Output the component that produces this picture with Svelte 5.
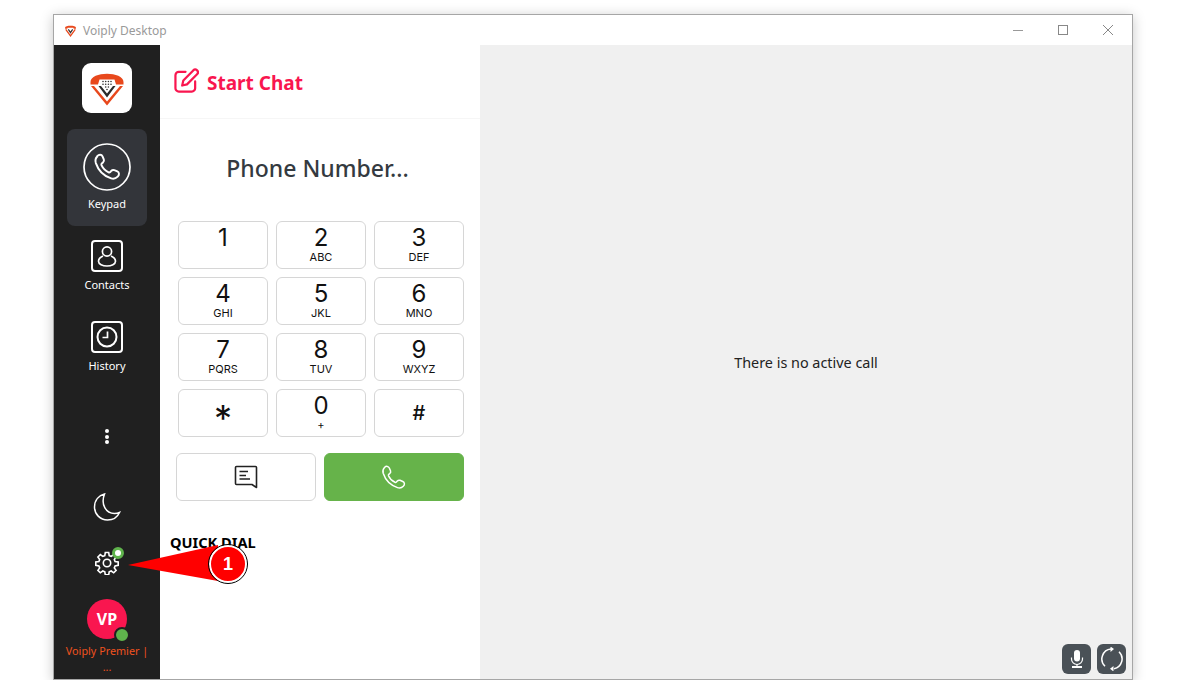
<script>
  const keys = [
    ['1', ''], ['2', 'ABC'], ['3', 'DEF'],
    ['4', 'GHI'], ['5', 'JKL'], ['6', 'MNO'],
    ['7', 'PQRS'], ['8', 'TUV'], ['9', 'WXYZ']
  ];
</script>

<div class="window">
  <header class="titlebar">
    <svg class="ticon" viewBox="0 0 12 12" width="13" height="13">
      <path d="M1 3.200C1 1 11 1 11 3.200V4.400H9L8.600 3.400H3.400L3 4.400H1Z" fill="#e8481c"/>
      <path d="M1.600 5 6 11 10.400 5" fill="none" stroke="#e8481c" stroke-width="1.200"/>
      <path d="M4 5 6 8 8 5" fill="none" stroke="#333" stroke-width="1.100"/>
    </svg>
    <span class="ttext">Voiply Desktop</span>
    <div class="controls">
      <span class="ctl"><svg width="12" height="12" viewBox="0 0 12 12"><path d="M1 6.500H11" stroke="#999" fill="none"/></svg></span>
      <span class="ctl"><svg width="12" height="12" viewBox="0 0 12 12"><rect x="1.500" y="1.500" width="9" height="9" stroke="#888" fill="none"/></svg></span>
      <span class="ctl"><svg width="12" height="12" viewBox="0 0 12 12"><path d="M1 1 11 11M11 1 1 11" stroke="#888" fill="none"/></svg></span>
    </div>
  </header>

  <div class="body">
    <aside class="sidebar">
      <div class="logo">
        <svg viewBox="0 0 36 36" width="36" height="36">
          <path d="M1.500 12C1.500 1 34.500 1 34.500 12V14.500H27L25.500 9.500H10.500L9 14.500H1.500Z" fill="#e8481c"/>
          <path d="M2 16H5L18 31.500 31 16H34L18 35.500Z" fill="#e8481c"/>
          <path d="M9.500 16H12L18 23.500 24 16H26.500L18 27.500Z" fill="#2b2b2b"/>
          <g fill="#333"><circle cx="14" cy="11.500" r=".8"/><circle cx="16.700" cy="11.500" r=".8"/><circle cx="19.400" cy="11.500" r=".8"/><circle cx="22" cy="11.500" r=".8"/><circle cx="14" cy="14.200" r=".8"/><circle cx="16.700" cy="14.200" r=".8"/><circle cx="19.400" cy="14.200" r=".8"/><circle cx="22" cy="14.200" r=".8"/><circle cx="16.700" cy="17" r=".8"/><circle cx="19.400" cy="17" r=".8"/><circle cx="18" cy="19.500" r=".8"/></g>
        </svg>
      </div>

      <div class="nav active">
        <svg viewBox="0 0 48 48" width="48" height="48" fill="none" stroke="#fff" stroke-width="1.700">
          <circle cx="24" cy="24" r="23"/>
          <path transform="translate(24 24) scale(1.15) translate(-24 -24)" d="M15.500 14.500c1.500-1.500 3.800-1.500 4.600.3l1.100 2.600c.4 1 .1 2-.7 2.700l-1 .9c-.4.400-.5.900-.3 1.400 1.300 2.800 3.400 5 6.200 6.300.5.200 1 .1 1.400-.3l.9-1c.7-.8 1.700-1 2.700-.7l2.600 1.100c1.800.8 1.800 3.100.3 4.600-1.500 1.500-3.600 2.200-5.700 1.500-7-2.300-11-6.500-13.300-13.300-.6-2 0-4.500 1.200-5.700Z"/>
        </svg>
        <span>Keypad</span>
      </div>

      <div class="nav">
        <svg viewBox="0 0 32 32" width="32" height="32" fill="none" stroke="#fff" stroke-width="1.700">
          <rect x="1" y="1" width="30" height="30" rx="3" stroke-width="2"/>
          <circle cx="16" cy="11.500" r="4.600"/>
          <path d="M12 16C8.500 17.500 7.500 19.800 7.500 21.300 7.500 24 11.500 26 16 26S24.500 24 24.500 21.300C24.500 19.800 23.500 17.500 20 16"/>
        </svg>
        <span>Contacts</span>
      </div>

      <div class="nav">
        <svg viewBox="0 0 32 32" width="32" height="32" fill="none" stroke="#fff" stroke-width="1.700">
          <rect x="1" y="1" width="30" height="30" rx="3" stroke-width="2"/>
          <circle cx="16" cy="16" r="9.500" stroke-width="2"/>
          <path d="M16.500 10.500V16.500H11.500"/>
        </svg>
        <span>History</span>
      </div>

      <div class="dots"><i></i><i></i><i></i></div>

      <svg class="moon" viewBox="0 0 30 30" width="30" height="30" fill="none" stroke="#fff" stroke-width="1.500">
        <path d="M12.500 2C7 3.500 2.500 8 2.500 15c0 7 5.500 13 13 13 5.500 0 10-3 12-7.500-1 .5-3 1-5 1C14 21.500 8.500 12.500 12.500 2Z"/>
      </svg>

      <div class="gear">
        <svg viewBox="0 0 24 24" width="24" height="24" fill="none" stroke="#fff" stroke-width="1.600">
          <circle cx="12" cy="12" r="3.700"/>
          <path d="M10.300 1.500h3.400l.5 3.100 2 .8 2.500-1.800 2.400 2.400-1.800 2.500.8 2 3.100.5v3.400l-3.100.5-.8 2 1.800 2.500-2.400 2.400-2.500-1.800-2 .8-.5 3.100h-3.400l-.5-3.100-2-.8-2.500 1.800-2.400-2.400 1.800-2.500-.8-2-3.100-.5v-3.400l3.100-.5.8-2-1.800-2.500 2.400-2.400 2.500 1.800 2-.8Z"/>
        </svg>
        <span class="gbadge"></span>
      </div>

      <div class="avatar">VP<span class="status"></span></div>
      <div class="user">Voiply Premier |<br />...</div>
    </aside>

    <section class="panel">
      <div class="chat-head">
        <svg viewBox="0 0 26 26" width="25" height="25" fill="none" stroke="#f9164f" stroke-width="2.300" stroke-linecap="round" stroke-linejoin="round">
          <path d="M12 4H5a3.500 3.500 0 0 0-3.500 3.500V21A3.500 3.500 0 0 0 5 24.500h13.500A3.500 3.500 0 0 0 22 21v-7"/>
          <path d="M20 2.500a2.800 2.800 0 0 1 4 4L13.500 17l-5 1.200L9.700 13Z"/>
        </svg>
        <h2>Start Chat</h2>
      </div>

      <div class="number">Phone Number...</div>

      <div class="keys">
        {#each keys as [d, l]}
          <button class="key"><b>{d}</b><small>{l}</small></button>
        {/each}
        <button class="key sym"><b class="star">*</b></button>
        <button class="key"><b>0</b><small>+</small></button>
        <button class="key sym"><b class="hash">#</b></button>
      </div>

      <div class="actions">
        <button class="act" aria-label="Message">
          <svg viewBox="0 0 26 26" width="26" height="26" fill="none" stroke="#222" stroke-width="1.600" stroke-linejoin="round">
            <path d="M3.500 2.500H22.500a1 1 0 0 1 1 1V23.500L19 20.500H3.500a1 1 0 0 1-1-1V3.500a1 1 0 0 1 1-1Z"/>
            <path d="M6.500 7.500H15M6.500 11.500H13M6.500 15H17"/>
          </svg>
        </button>
        <button class="act call" aria-label="Call">
          <svg viewBox="0 0 26 26" width="26" height="26" fill="none" stroke="#fff" stroke-width="1.500">
            <path d="M3.500 3.500c1.800-1.800 4-1.300 4.800.5l1.200 2.800c.4 1 .1 2-.7 2.700l-1 .9c-.4.400-.5.900-.3 1.400 1.300 3 3.400 5.200 6.500 6.500.5.200 1 .1 1.400-.3l.9-1c.7-.8 1.700-1 2.700-.7l2.800 1.200c1.800.8 2.300 3 .5 4.800-1.500 1.500-3.800 2-5.800 1.300-7-2.300-12-7.300-14.300-14.300-.6-2-.2-4.300 1.300-5.800Z"/>
          </svg>
        </button>
      </div>

      <h3 class="quick">QUICK DIAL</h3>
    </section>

    <main class="stage">
      <p>There is no active call</p>
      <div class="tools">
        <button class="tool" aria-label="Microphone">
          <svg viewBox="0 0 20 20" width="20" height="20" fill="#fff">
            <rect x="7" y="1" width="6" height="11.500" rx="3"/>
            <path d="M4.500 8.500v1.500a5.500 5.500 0 0 0 11 0V8.500" fill="none" stroke="#fff" stroke-width="1.200"/>
            <rect x="9.400" y="15" width="1.200" height="2.500"/><rect x="5" y="17" width="10" height="2"/>
          </svg>
        </button>
        <button class="tool" aria-label="Refresh">
          <svg viewBox="0 0 24 24" width="24" height="24" fill="none" stroke="#fff" stroke-width="1.500">
            <path d="M11 2A10 10 0 0 0 5 19.200"/>
            <path d="M19 4.800A10 10 0 0 1 14 21.800"/>
            <path d="M10.500 -.5 14 2 10.500 5Z" fill="#fff" stroke="none"/>
            <path d="M13.500 19 10 21.800 13.500 24.500Z" fill="#fff" stroke="none"/>
          </svg>
        </button>
      </div>
    </main>
  </div>

  <div class="callout">
    <svg viewBox="0 0 120 44" width="120" height="44"><path d="M0 24 90 4V40Z" fill="#f00"/></svg>
    <span class="num">1</span>
  </div>
</div>

<style>
  :global(body) { margin: 0; background: #fff; }
  * { box-sizing: border-box; }
  button { font: inherit; padding: 0; cursor: pointer; }

  .window {
    position: relative;
    width: 1080px;
    height: 666px;
    margin: 14px 0 0 53px;
    border: 1px solid #a6a6a6;
    background: #fff;
    box-shadow: 0 2px 12px rgba(0, 0, 0, .22);
    display: flex;
    flex-direction: column;
    font-family: "Noto Sans", sans-serif;
    overflow: visible;
  }
  .titlebar {
    height: 30px;
    flex: none;
    display: flex;
    align-items: center;
    padding-left: 10px;
    background: #fff;
  }
  .ttext { margin-left: 6px; font-size: 12px; color: #9a9a9a; }
  .controls { margin-left: auto; display: flex; padding-right: 2px; }
  .ctl { width: 45px; height: 30px; display: flex; align-items: center; justify-content: center; }

  .body { flex: 1; display: flex; min-height: 0; }

  .sidebar {
    width: 106px;
    flex: none;
    background: #202020;
    color: #fff;
    display: flex;
    flex-direction: column;
    align-items: center;
    padding-top: 18px;
  }
  .logo {
    width: 50px;
    height: 50px;
    border-radius: 9px;
    background: #fff;
    display: flex;
    align-items: center;
    justify-content: center;
    margin-bottom: 16px;
  }
  .nav {
    width: 80px;
    height: 81px;
    display: flex;
    flex-direction: column;
    align-items: center;
    padding-top: 14px;
    gap: 5px;
    font-size: 11px;
    line-height: 15px;
  }
  .nav.active {
    height: 97px;
    border-radius: 8px;
    background: #33353a;
  }
  .dots {
    display: flex;
    flex-direction: column;
    gap: 1.500px;
    margin-top: 41px;
  }
  .dots i { width: 4px; height: 4px; border-radius: 50%; background: #fff; display: block; }
  .moon { margin-top: 48px; }
  .gear { position: relative; margin-top: 29px; height: 24px; }
  .gear svg { display: block; }
  .gbadge {
    position: absolute;
    top: -4px;
    right: -5px;
    width: 12px;
    height: 12px;
    border-radius: 50%;
    background: #fff;
    border: 3px solid #5fb34c;
  }
  .avatar {
    position: relative;
    width: 40px;
    height: 40px;
    margin-top: 24px;
    border-radius: 50%;
    background: #f9164f;
    font-weight: 700;
    font-size: 16px;
    display: flex;
    align-items: center;
    justify-content: center;
  }
  .status {
    position: absolute;
    right: -3px;
    bottom: -4px;
    width: 16px;
    height: 16px;
    border-radius: 50%;
    background: #5fb34c;
    border: 2px solid #202020;
  }
  .user {
    margin-top: 4px;
    font-size: 10.800px;
    line-height: 16px;
    color: #f0521e;
    text-align: center;
    white-space: nowrap;
  }

  .panel {
    width: 320px;
    flex: none;
    background: #fff;
    display: flex;
    flex-direction: column;
  }
  .chat-head {
    height: 74px;
    flex: none;
    display: flex;
    align-items: center;
    gap: 8px;
    padding: 0 0 2px 14px;
    border-bottom: 1px solid #f6f6f6;
  }
  .chat-head h2 {
    margin: 4px 0 0;
    font-size: 19px;
    font-weight: 700;
    color: #f9164f;
  }
  .number {
    margin-top: 33px;
    text-align: center;
    font-size: 23px;
    line-height: 32px;
    font-weight: 500;
    color: #343a40;
    padding-right: 5px;
  }
  .keys {
    display: grid;
    grid-template-columns: repeat(3, 90px);
    grid-auto-rows: 48px;
    column-gap: 8px;
    row-gap: 8px;
    margin: 37px 0 0 18px;
    font-family: Inter, sans-serif;
  }
  .key {
    border: 1px solid #d6d6d6;
    border-radius: 6px;
    background: #fff;
    color: #111;
    display: flex;
    flex-direction: column;
    align-items: center;
    justify-content: flex-start;
    padding-top: 1px;
  }
  .key b { font-weight: 400; font-size: 24px; line-height: 29px; }
  .key small { font-size: 11px; line-height: 12px; margin-top: -1px; }
  .key.sym { justify-content: center; padding-top: 0; }
  .key .star { font-size: 36px; line-height: 36px; height: 26px; }
  .key .hash { font-size: 20px; font-weight: 500; }
  .actions {
    display: flex;
    gap: 8px;
    margin: 16px 0 0 16px;
  }
  .act {
    width: 140px;
    height: 48px;
    border: 1px solid #d6d6d6;
    border-radius: 6px;
    background: #fff;
    display: flex;
    align-items: center;
    justify-content: center;
  }
  .act.call { background: #66b34a; border-color: #66b34a; }
  .quick {
    margin: 32px 0 0 10px;
    font-size: 14.600px;
    line-height: 18px;
    font-weight: 700;
    color: #000;
  }

  .stage {
    position: relative;
    flex: 1;
    background: #f0f0f0;
    display: flex;
    align-items: center;
    justify-content: center;
  }
  .stage p {
    margin: 0;
    font-size: 14.400px;
    color: #222;
  }
  .tools {
    position: absolute;
    right: 6px;
    bottom: 5px;
    display: flex;
    gap: 6px;
  }
  .tool {
    width: 29px;
    height: 30px;
    border: 0;
    border-radius: 6px;
    background: #4a5157;
    display: flex;
    align-items: center;
    justify-content: center;
  }

  .callout {
    position: absolute;
    left: 74px;
    top: 526px;
    width: 120px;
    height: 44px;
  }
  .callout svg { display: block; }
  .num {
    position: absolute;
    left: 81px;
    top: 4px;
    width: 38px;
    height: 38px;
    border-radius: 50%;
    background: #f00;
    border: 2px solid #fff;
    outline: 1px solid #000;
    outline-offset: 0;
    color: #fff;
    font-family: "Liberation Sans", sans-serif;
    font-weight: 700;
    font-size: 18px;
    display: flex;
    align-items: center;
    justify-content: center;
  }
</style>
